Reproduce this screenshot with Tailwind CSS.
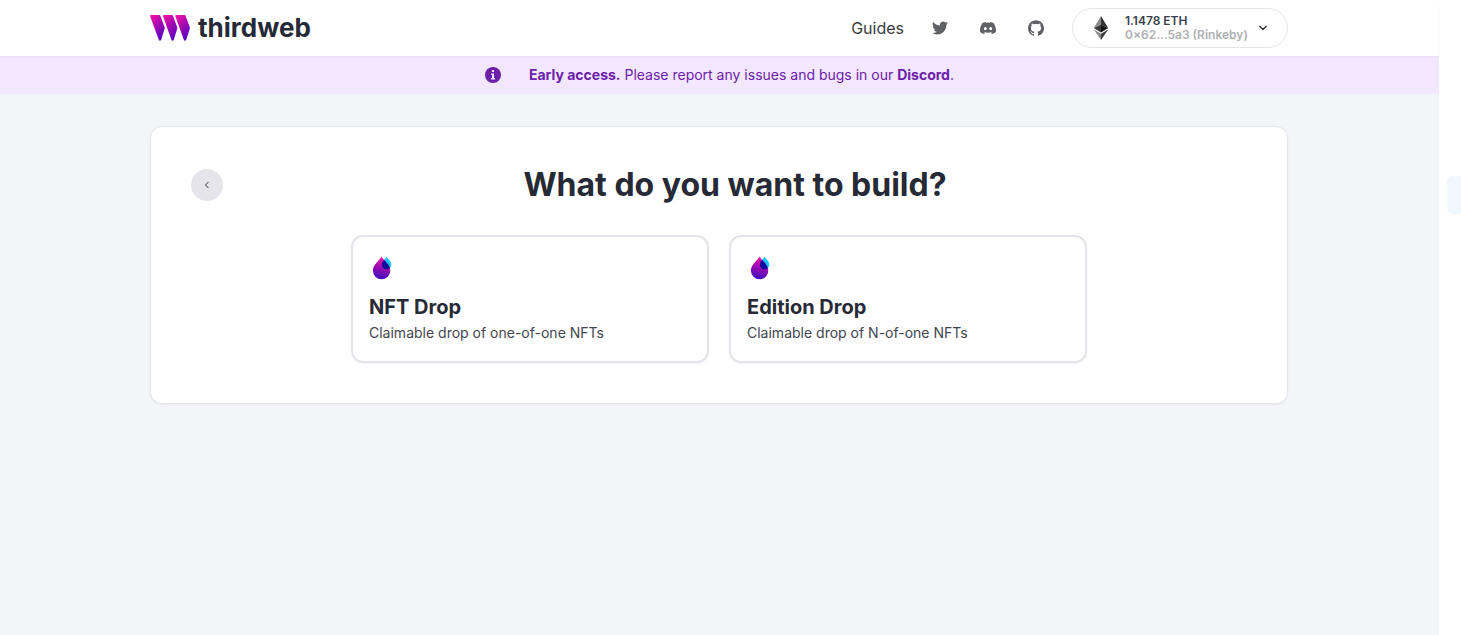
<!DOCTYPE html>
<html lang="en">
<head>
<meta charset="utf-8">
<meta name="viewport" content="width=device-width, initial-scale=1">
<title>thirdweb</title>
<script src="https://cdn.jsdelivr.net/npm/@tailwindcss/browser@4"></script>
</head>
<body class="relative min-h-screen overflow-x-hidden bg-white pr-[22px] font-['Inter',sans-serif] text-[#262a36]">
<div class="flex min-h-screen flex-col bg-[#f4f5f8]">
  <header class="relative bg-white pr-px shadow-xs">
    <div class="mx-auto flex h-14 max-w-[1170px] items-center justify-between px-4">
      <a href="#" class="flex items-center gap-2" aria-label="thirdweb home">
        <svg class="h-[26px] w-10" viewBox="0 0 40 26" aria-hidden="true">
          <defs>
            <linearGradient id="brand" x1="0.1" y1="0" x2="0.7" y2="1"><stop offset="0" stop-color="#f213a4"/><stop offset="1" stop-color="#5204bf"/></linearGradient>
          </defs>
          <path fill="url(#brand)" d="M.8 0H9.200Q10.100 0 10.400.8L14.600 12.200Q14.900 13 14.600 13.800L11.200 24.800Q10.800 25.800 10 25.800T8.800 24.800L.1 1.200Q-.2 0 .8 0Z"/>
          <path fill="url(#brand)" d="M14.200 0H21.800Q22.700 0 23 .8L27.200 12.200Q27.500 13 27.200 13.800L23.800 24.800Q23.400 25.800 22.600 25.800T21.400 24.800L13 1.200Q12.700 0 14.200 0Z"/>
          <path fill="url(#brand)" d="M26.400 0H34.400Q35.300 0 35.600.8L39.800 12.200Q40.100 13 39.800 13.800L36.200 24.800Q35.800 25.800 35 25.800T33.800 24.800L25.400 1.200Q25.100 0 26.400 0Z"/>
        </svg>
        <span class="text-[26px] leading-8 font-bold">thirdweb</span>
      </a>
      <div class="flex items-center gap-7">
        <nav class="flex items-center gap-7 text-[#606164]">
          <a href="#" class="text-base text-[#3a3c42]">Guides</a>
          <a href="#" aria-label="Twitter" class="mr-1"><svg class="size-4" viewBox="0 0 24 24" fill="currentColor"><path d="M23.953 4.57a10 10 0 01-2.825.775 4.958 4.958 0 002.163-2.723c-.951.555-2.005.959-3.127 1.184a4.92 4.92 0 00-8.384 4.482C7.69 8.095 4.067 6.13 1.64 3.162a4.822 4.822 0 00-.666 2.475c0 1.71.87 3.213 2.188 4.096a4.904 4.904 0 01-2.228-.616v.06a4.923 4.923 0 003.946 4.827 4.996 4.996 0 01-2.212.085 4.936 4.936 0 004.604 3.417 9.867 9.867 0 01-6.102 2.105c-.39 0-.779-.023-1.17-.067a13.995 13.995 0 007.557 2.209c9.053 0 13.998-7.496 13.998-13.985 0-.21 0-.42-.015-.63A9.935 9.935 0 0024 4.59z"/></svg></a>
          <a href="#" aria-label="Discord" class="mr-1"><svg class="size-4" viewBox="0 0 24 24" fill="currentColor"><path d="M20.317 4.37a19.79 19.79 0 00-4.885-1.515.074.074 0 00-.079.037c-.21.375-.444.865-.608 1.25a18.27 18.27 0 00-5.487 0 12.64 12.64 0 00-.618-1.25.077.077 0 00-.078-.037A19.736 19.736 0 003.677 4.37a.07.07 0 00-.032.028C.533 9.046-.32 13.58.099 18.058a.082.082 0 00.031.056 19.9 19.9 0 005.993 3.03.078.078 0 00.084-.028c.462-.63.874-1.295 1.226-1.994a.076.076 0 00-.042-.106 13.107 13.107 0 01-1.872-.892.077.077 0 01-.008-.128c.126-.094.252-.192.372-.291a.074.074 0 01.078-.01c3.928 1.793 8.18 1.793 12.061 0a.074.074 0 01.079.009c.12.099.246.198.373.292a.077.077 0 01-.007.128 12.299 12.299 0 01-1.873.891.077.077 0 00-.041.107c.36.698.772 1.363 1.225 1.993a.076.076 0 00.084.029 19.84 19.84 0 006.003-3.03.077.077 0 00.031-.055c.5-5.177-.838-9.674-3.549-13.66a.061.061 0 00-.031-.028zM8.02 15.33c-1.183 0-2.157-1.085-2.157-2.419 0-1.333.956-2.419 2.157-2.419 1.21 0 2.176 1.095 2.157 2.42 0 1.333-.956 2.418-2.157 2.418zm7.975 0c-1.183 0-2.157-1.085-2.157-2.419 0-1.333.955-2.419 2.157-2.419 1.21 0 2.176 1.095 2.157 2.42 0 1.333-.946 2.418-2.157 2.418z"/></svg></a>
          <a href="#" aria-label="GitHub"><svg class="size-4" viewBox="0 0 24 24" fill="currentColor"><path d="M12 .297c-6.63 0-12 5.373-12 12 0 5.303 3.438 9.8 8.205 11.385.6.113.82-.258.82-.577 0-.285-.01-1.04-.015-2.04-3.338.724-4.042-1.61-4.042-1.61C4.422 18.07 3.633 17.7 3.633 17.7c-1.087-.744.084-.729.084-.729 1.205.084 1.838 1.236 1.838 1.236 1.07 1.835 2.809 1.305 3.495.998.108-.776.417-1.305.76-1.605-2.665-.3-5.466-1.332-5.466-5.93 0-1.31.465-2.38 1.235-3.22-.135-.303-.54-1.523.105-3.176 0 0 1.005-.322 3.3 1.23.96-.267 1.98-.399 3-.405 1.02.006 2.04.138 3 .405 2.28-1.552 3.285-1.23 3.285-1.23.645 1.653.24 2.873.12 3.176.765.84 1.23 1.91 1.23 3.22 0 4.61-2.805 5.625-5.475 5.92.42.36.81 1.096.81 2.22 0 1.606-.015 2.896-.015 3.286 0 .315.21.69.825.57C20.565 22.092 24 17.592 24 12.297c0-6.627-5.373-12-12-12"/></svg></a>
        </nav>
        <button type="button" class="flex h-10 w-[216px] items-center rounded-full border border-[#e4e4ea] bg-white px-5 text-left">
          <svg class="h-6 w-4" viewBox="0 0 16 26" aria-hidden="true">
            <path fill="#8c8c8c" d="M8 0V9.600L.2 13.100Z"/><path fill="#343434" d="M8 0V9.600L15.800 13.100Z"/>
            <path fill="#393939" d="M8 9.600V17.800L.2 13.100Z"/><path fill="#141414" d="M8 9.600V17.800L15.800 13.100Z"/>
            <path fill="#8c8c8c" d="M8 19.300V26L.2 14.700Z"/><path fill="#3c3c3b" d="M8 19.300V26L15.800 14.700Z"/>
          </svg>
          <span class="ml-4 flex flex-1 flex-col text-xs leading-[14px] font-semibold whitespace-nowrap">
            <span class="text-[#3a3f4b]">1.1478 ETH</span>
            <span class="text-[#b0b0b3]">0×62...5a3 (Rinkeby)</span>
          </span>
          <svg class="size-2" viewBox="0 0 8 8" fill="none" stroke="#2f3137" stroke-width="1.4" stroke-linecap="round" stroke-linejoin="round" aria-hidden="true"><path d="M.8 2.300 4 5.500 7.200 2.300"/></svg>
        </button>
      </div>
    </div>
  </header>

  <div role="status" class="flex min-h-[38px] items-center justify-center gap-7 bg-[#f3e6ff] px-4 text-sm leading-5 text-[#6b21a8]">
    <svg class="size-4 shrink-0" viewBox="0 0 16 16" aria-hidden="true"><circle cx="8" cy="8" r="8" fill="#6b1fa8"/><path fill="#f3e6ff" d="M6.900 3h2.100v2.100H6.900zM6 6.500h3.100v4.600h1V12.400H6v-1.300h1V7.800H6z"/></svg>
    <p><strong class="font-bold">Early access.</strong> Please report any issues and bugs in our <a href="#" class="font-bold">Discord</a>.</p>
  </div>

  <div class="pr-px">
  <main class="mx-auto w-full max-w-[1170px] px-4 py-8">
    <section class="rounded-xl border border-[#e6e5ec] bg-white p-10 shadow-xs">
      <div class="flex items-center">
        <button type="button" aria-label="Back" class="flex size-8 shrink-0 items-center justify-center rounded-full bg-[#e5e4ea]">
          <svg class="size-2" viewBox="0 0 8 8" fill="none" stroke="#33353c" stroke-width="1" stroke-linecap="round" stroke-linejoin="round" aria-hidden="true"><path d="M5.200 1.200 2.500 4 5.200 6.800"/></svg>
        </button>
        <h1 class="flex-1 text-center text-[32px] leading-9 font-bold">What do you want to build?</h1>
      </div>
      <div class="mx-auto mt-8 grid max-w-[736px] grid-cols-2 gap-5">
        <a href="#" class="block rounded-xl border-2 border-[#e5e4ea] p-4 shadow-xs">
          <svg class="size-8" viewBox="0 0 32 32" aria-hidden="true">
            <defs><linearGradient id="drop" x1="0.5" y1="0" x2="0.3" y2="1"><stop offset="0" stop-color="#f213a4"/><stop offset="0.45" stop-color="#a00ab0"/><stop offset="1" stop-color="#3a0ec0"/></linearGradient>
            <clipPath id="dropShape"><path d="M12.600 3.500C14.500 7.200 21.300 11.500 21.300 17.500A8.700 8.700 0 0 1 3.900 17.500C3.900 11.500 10.700 7.200 12.600 3.500Z"/></clipPath></defs>
            <path fill="#19c5ff" d="M17.600 3.500C18.600 6 22.300 8.300 22.300 11.700A4.700 4.700 0 0 1 12.900 11.700C12.900 8.300 16.600 6 17.600 3.500Z"/>
            <path fill="url(#drop)" d="M12.600 3.500C14.500 7.200 21.300 11.500 21.300 17.500A8.700 8.700 0 0 1 3.900 17.500C3.900 11.500 10.700 7.200 12.600 3.500Z"/>
            <path clip-path="url(#dropShape)" fill="#0a0a9c" d="M17.600 3.500C18.600 6 22.300 8.300 22.300 11.700A4.700 4.700 0 0 1 12.900 11.700C12.900 8.300 16.600 6 17.600 3.500Z"/>
          </svg>
          <h2 class="mt-2 text-xl leading-7 font-bold">NFT Drop</h2>
          <p class="text-sm leading-6 text-[#43464f]">Claimable drop of one-of-one NFTs</p>
        </a>
        <a href="#" class="block rounded-xl border-2 border-[#e5e4ea] p-4 shadow-xs">
          <svg class="size-8" viewBox="0 0 32 32" aria-hidden="true">
            <path fill="#19c5ff" d="M17.600 3.500C18.600 6 22.300 8.300 22.300 11.700A4.700 4.700 0 0 1 12.900 11.700C12.900 8.300 16.600 6 17.600 3.500Z"/>
            <path fill="url(#drop)" d="M12.600 3.500C14.500 7.200 21.300 11.500 21.300 17.500A8.700 8.700 0 0 1 3.900 17.500C3.900 11.500 10.700 7.200 12.600 3.500Z"/>
            <path clip-path="url(#dropShape)" fill="#0a0a9c" d="M17.600 3.500C18.600 6 22.300 8.300 22.300 11.700A4.700 4.700 0 0 1 12.900 11.700C12.900 8.300 16.600 6 17.600 3.500Z"/>
          </svg>
          <h2 class="mt-2 text-xl leading-7 font-bold">Edition Drop</h2>
          <p class="text-sm leading-6 text-[#43464f]">Claimable drop of N-of-one NFTs</p>
        </a>
      </div>
    </section>
  </main>
  </div>
</div>
<aside class="absolute top-44 right-0 h-[38px] w-3.5 rounded-l-md bg-[#eff8ff]" aria-hidden="true"></aside>
</body>
</html>
